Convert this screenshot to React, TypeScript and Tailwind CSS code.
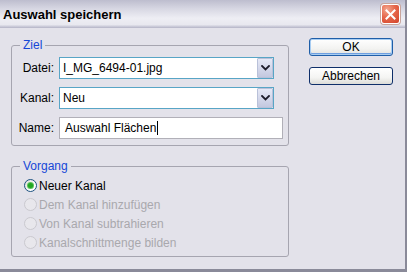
import React from "react";

function Chevron() {
  return (
    <svg width="9" height="6" viewBox="0 0 9 6" className="block">
      <path d="M1 1 L4.5 4.5 L8 1" fill="none" stroke="#1d1d2b" strokeWidth="1.8" strokeLinecap="square" />
    </svg>
  );
}

function Select({ value }: { value: string }) {
  return (
    <div className="w-[215px] h-[22px] border border-[#58a5c6] bg-white flex items-center">
      <span className="flex-1 pl-[3px] text-[12px] leading-none text-black">{value}</span>
      <div className="w-[16px] h-[20px] mr-0 border border-[#b9c1d9] rounded-[1px] bg-[linear-gradient(to_bottom,#e6e9f6_0%,#d3d7ea_55%,#c3c8df_100%)] flex items-center justify-center">
        <Chevron />
      </div>
    </div>
  );
}

function Radio({ label, checked, disabled }: { label: string; checked?: boolean; disabled?: boolean }) {
  return (
    <div className="h-[19px] flex items-center gap-[2px]">
      {checked ? (
        <div className="w-[13px] h-[13px] rounded-full border border-[#1d5281] bg-[linear-gradient(135deg,#dcdcd6_0%,#ffffff_70%)] flex items-center justify-center">
          <div className="w-[5px] h-[5px] rounded-full bg-[#22a622] shadow-[0_0_0_1px_#5cc45c]" />
        </div>
      ) : (
        <div className="w-[13px] h-[13px] rounded-full border border-[#cac9cf] bg-[#e8e7ec]" />
      )}
      <span className={`text-[12px] leading-none ${disabled ? "text-[#a9a8ad]" : "text-black"}`}>{label}</span>
    </div>
  );
}

export default function App() {
  return (
    <div className="w-[407px] h-[272px] flex flex-col bg-[#e3e2ea] border-r-2 border-b-[3px] border-[#8a8a99] overflow-hidden font-['Liberation_Sans',Arial,sans-serif]">
      {/* Title bar */}
      <div className="h-[28px] shrink-0 flex items-center justify-between bg-[linear-gradient(to_bottom,#bdbdce_0%,#d6d6e2_30%,#eeeef4_65%,#e8e8ef_88%,#b3b3c6_100%)]">
        <span className="pl-[3px] pt-[1px] text-[13px] font-bold text-black leading-none">Auswahl speichern</span>
        <div className="w-[19px] h-[20px] mr-[5px] rounded-[3px] border border-white bg-[radial-gradient(circle_at_30%_25%,#f3a78f_0%,#e6674b_45%,#d2432a_100%)] shadow-[0_0_0_1px_#c9a59c] flex items-center justify-center">
          <svg width="11" height="11" viewBox="0 0 11 11">
            <path d="M1.5 1.5 L9.5 9.5 M9.5 1.5 L1.5 9.5" stroke="#ffffff" strokeWidth="2" strokeLinecap="square" />
          </svg>
        </div>
      </div>

      {/* Body */}
      <div className="flex flex-row pl-[11px] pt-[10px]">
        <div className="w-[278px] flex flex-col gap-[13px]">
          <fieldset className="border border-[#a6a5b0] rounded-[3px] p-0 m-0">
            <legend className="ml-[8px] px-[3px] text-[12px] leading-[14px] text-[#1547d7]">Ziel</legend>
            <div className="pt-[5px] pb-[6px] flex flex-col gap-[8px]">
              <div className="h-[22px] flex items-center">
                <span className="w-[42px] mr-[5px] text-right text-[12px] leading-none text-black">Datei:</span>
                <Select value="I_MG_6494-01.jpg" />
              </div>
              <div className="h-[22px] flex items-center">
                <span className="w-[42px] mr-[5px] text-right text-[12px] leading-none text-black">Kanal:</span>
                <Select value="Neu" />
              </div>
              <div className="h-[22px] flex items-center">
                <span className="w-[42px] mr-[5px] text-right text-[12px] leading-none text-black">Name:</span>
                <div className="w-[224px] h-[22px] border border-[#b1b0b8] bg-white flex items-center pl-[5px]">
                  <span className="text-[12px] leading-none text-black">Auswahl Flächen</span>
                  <span className="w-[1px] h-[14px] bg-black ml-[1px]" />
                </div>
              </div>
            </div>
          </fieldset>

          <fieldset className="border border-[#a6a5b0] rounded-[3px] p-0 m-0">
            <legend className="ml-[8px] px-[3px] text-[12px] leading-[14px] text-[#1547d7]">Vorgang</legend>
            <div className="pt-[3px] pb-[4px] pl-[12px] flex flex-col">
              <Radio label="Neuer Kanal" checked />
              <Radio label="Dem Kanal hinzufügen" disabled />
              <Radio label="Von Kanal subtrahieren" disabled />
              <Radio label="Kanalschnittmenge bilden" disabled />
            </div>
          </fieldset>
        </div>

        <div className="ml-[20px] w-[84px] flex flex-col gap-[11px]">
          <button className="h-[18px] rounded-[3px] border border-[#1f5ea8] bg-[linear-gradient(to_bottom,#ffffff_0%,#f3f3f1_60%,#e2e2de_100%)] shadow-[inset_0_0_0_1px_#a8cdf2,inset_0_-1px_0_1px_#6f9fe0] flex items-center justify-center text-[12px] leading-none text-black">
            OK
          </button>
          <button className="h-[18px] rounded-[3px] border border-[#0f2f6a] bg-[linear-gradient(to_bottom,#ffffff_0%,#f4f4f2_60%,#dcdcd8_100%)] flex items-center justify-center text-[12px] leading-none text-black">
            Abbrechen
          </button>
        </div>
      </div>
    </div>
  );
}
